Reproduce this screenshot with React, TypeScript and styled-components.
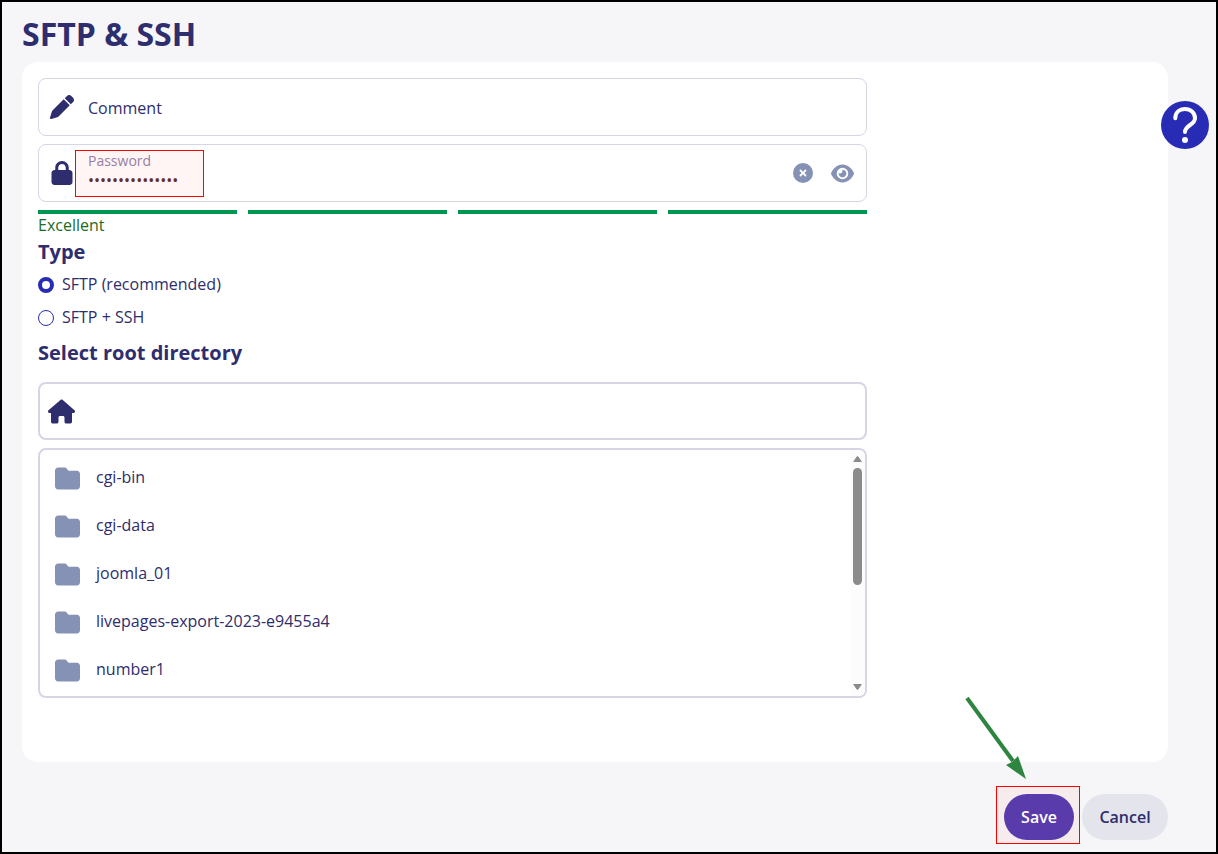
import React, { useState } from "react";
import styled, { createGlobalStyle } from "styled-components";
import { FaPen, FaLock, FaCircleXmark, FaEye, FaHouse, FaFolder } from "react-icons/fa6";

const navy = "#2e2d6d";
const slate = "#8592b5";
const line = "#d7d4e5";
const blue = "#282cb4";

const GlobalStyle = createGlobalStyle`
  * { box-sizing: border-box; }
  body {
    margin: 0;
    background: #f6f6f9;
    color: ${navy};
    font-family: "Open Sans", "Noto Sans", sans-serif;
    font-size: 16px;
  }
  button, input { font: inherit; color: inherit; }
`;

const Frame = styled.div`
  position: relative;
  display: flex;
  flex-direction: column;
  min-height: 100vh;
  padding: 0 48px 12px 20px;
  border: 2px solid #000;
`;

const Title = styled.h1`
  margin: 0;
  padding: 10px 0 6px;
  font-size: 32px;
  line-height: 44px;
  font-weight: 700;
`;

const Panel = styled.main`
  display: grid;
  grid-template-columns: 3fr 1fr;
  column-gap: 9px;
  flex: 1;
  padding: 16px 16px 64px;
  border-radius: 16px;
  background: #fff;
`;

const Form = styled.form`
  min-width: 0;
`;

const Field = styled.div`
  position: relative;
  display: flex;
  align-items: center;
  height: 58px;
  margin-bottom: 8px;
  padding: 0 11px 0 10px;
  border: 1px solid ${line};
  border-radius: 8px;
`;

const FieldIcon = styled.span`
  display: flex;
  justify-content: center;
  flex: none;
  width: 25px;
  margin-right: 14px;
`;

const FieldText = styled.div`
  display: flex;
  flex: 1;
  flex-direction: column;
  min-width: 0;
  padding-bottom: 4px;
`;

const FieldLabel = styled.label`
  color: #9284ac;
  font-size: 14px;
  line-height: 18px;
`;

const TextInput = styled.input`
  width: 100%;
  height: 20px;
  padding: 0;
  border: 0;
  outline: 0;
  background: transparent;
  line-height: 20px;

  &::placeholder { color: ${navy}; opacity: 1; }
`;

const CommentInput = styled(TextInput)`
  height: 26px;
  padding-top: 2px;
  line-height: 24px;
`;

const PasswordInput = styled(TextInput)`
  color: #59302f;
`;

const IconButton = styled.button`
  display: flex;
  align-items: center;
  justify-content: center;
  flex: none;
  width: 24px;
  height: 24px;
  margin-left: 16px;
  padding: 0;
  border: 0;
  background: none;
  color: ${slate};
`;

const Highlight = styled.span`
  position: absolute;
  border: 1px solid #f00;
  background: rgba(255, 64, 32, 0.05);
  pointer-events: none;
`;

const PasswordHighlight = styled(Highlight)`
  top: 5px;
  left: 36px;
  width: 129px;
  height: 47px;
`;

const Strength = styled.div`
  display: grid;
  grid-template-columns: repeat(4, 1fr);
  gap: 11px;
`;

const StrengthBar = styled.span`
  height: 4px;
  background: #00964f;
`;

const StrengthText = styled.p`
  margin: 0;
  color: #1e6b1e;
  line-height: 22px;
`;

const Group = styled.fieldset`
  min-width: 0;
  margin: 0;
  padding: 0;
  border: 0;
`;

const Legend = styled.legend`
  padding: 0;
  font-size: 20px;
  line-height: 32px;
  font-weight: 700;
`;

const Heading = styled.h2`
  margin: 3px 0 13px;
  font-size: 20px;
  line-height: 32px;
  font-weight: 700;
`;

const Option = styled.label`
  display: flex;
  align-items: center;
  height: 33px;
`;

const OptionText = styled.span`
  padding-bottom: 2px;
`;

const Radio = styled.input`
  appearance: none;
  width: 16px;
  height: 16px;
  margin: 0 8px 0 0;
  border: 1px solid ${blue};
  border-radius: 50%;
  background: #fff;

  &:checked { border-width: 4px; }
`;

const PathBar = styled.nav`
  display: flex;
  align-items: center;
  height: 58px;
  margin-bottom: 8px;
  padding: 0 7px;
  border: 2px solid ${line};
  border-radius: 8px;
`;

const HomeButton = styled.button`
  display: flex;
  justify-content: center;
  width: 28px;
  padding: 0;
  border: 0;
  background: none;
`;

const Browser = styled.div`
  display: flex;
  height: 250px;
  border: 2px solid ${line};
  border-radius: 8px;
  overflow: hidden;
`;

const FolderList = styled.ul`
  flex: 1;
  margin: 0;
  padding: 4px 0 0;
  list-style: none;
  overflow: hidden;
`;

const FolderButton = styled.button`
  display: flex;
  align-items: center;
  gap: 16px;
  width: 100%;
  height: 48px;
  padding: 0 15px;
  border: 0;
  background: none;
  text-align: left;
`;

const FolderName = styled.span`
  padding-bottom: 2px;
`;

const ScrollTrack = styled.div`
  display: flex;
  flex-direction: column;
  align-items: center;
  width: 15px;
  padding: 6px 0;
  background: #fcfcfc;
`;

const ScrollThumb = styled.span`
  width: 9px;
  height: 117px;
  margin: 6px 0 auto;
  border-radius: 5px;
  background: #8b8b8b;
`;

const HelpButton = styled.button`
  position: absolute;
  top: 99px;
  right: 7px;
  display: flex;
  width: 48px;
  height: 48px;
  padding: 0;
  border: 0;
  border-radius: 50%;
  background: ${blue};
`;

const Actions = styled.footer`
  display: flex;
  justify-content: flex-end;
  gap: 8px;
  margin-top: 32px;
`;

const SaveSlot = styled.div`
  position: relative;
  isolation: isolate;
`;

const Pill = styled.button<{ $primary?: boolean }>`
  min-width: ${(p) => (p.$primary ? "70px" : "86px")};
  height: 46px;
  padding: 0 17px;
  border: 0;
  border-radius: 23px;
  background: ${(p) => (p.$primary ? "#5a3bab" : "#e3e4ec")};
  color: ${(p) => (p.$primary ? "#fff" : navy)};
  font-weight: 600;
`;

const SaveHighlight = styled(Highlight)`
  inset: -8px -6px -4px -8px;
  z-index: -1;
`;

const Arrow = styled.svg`
  position: absolute;
  top: -98px;
  left: -39px;
  pointer-events: none;
`;

const folders = ["cgi-bin", "cgi-data", "joomla_01", "livepages-export-2023-e9455a4", "number1"];

export default function App() {
  const [comment, setComment] = useState("");
  const [password, setPassword] = useState("Xk7#mP2!vQ9$rT4");
  const [visible, setVisible] = useState(false);
  const [type, setType] = useState("sftp");

  return (
    <>
      <GlobalStyle />
      <Frame>
        <Title>SFTP &amp; SSH</Title>
        <Panel>
          <Form id="access" onSubmit={(e) => e.preventDefault()}>
            <Field>
              <FieldIcon><FaPen size={24} /></FieldIcon>
              <CommentInput
                aria-label="Comment"
                placeholder="Comment"
                value={comment}
                onChange={(e) => setComment(e.target.value)}
              />
            </Field>
            <Field>
              <FieldIcon><FaLock size={24} /></FieldIcon>
              <FieldText>
                <FieldLabel htmlFor="password">Password</FieldLabel>
                <PasswordInput
                  id="password"
                  type={visible ? "text" : "password"}
                  value={password}
                  onChange={(e) => setPassword(e.target.value)}
                />
              </FieldText>
              <IconButton type="button" aria-label="Clear password" onClick={() => setPassword("")}>
                <FaCircleXmark size={20} />
              </IconButton>
              <IconButton type="button" aria-label="Show password" onClick={() => setVisible(!visible)}>
                <FaEye size={23} />
              </IconButton>
              <PasswordHighlight />
            </Field>
            <Strength aria-hidden="true">
              <StrengthBar />
              <StrengthBar />
              <StrengthBar />
              <StrengthBar />
            </Strength>
            <StrengthText>Excellent</StrengthText>
            <Group>
              <Legend>Type</Legend>
              <Option>
                <Radio type="radio" name="type" checked={type === "sftp"} onChange={() => setType("sftp")} />
                <OptionText>SFTP (recommended)</OptionText>
              </Option>
              <Option>
                <Radio type="radio" name="type" checked={type === "ssh"} onChange={() => setType("ssh")} />
                <OptionText>SFTP + SSH</OptionText>
              </Option>
            </Group>
            <Heading>Select root directory</Heading>
            <PathBar aria-label="Current directory">
              <HomeButton type="button" aria-label="Home"><FaHouse size={27} /></HomeButton>
            </PathBar>
            <Browser>
              <FolderList>
                {folders.map((name) => (
                  <li key={name}>
                    <FolderButton type="button">
                      <FaFolder size={25} color={slate} />
                      <FolderName>{name}</FolderName>
                    </FolderButton>
                  </li>
                ))}
              </FolderList>
              <ScrollTrack aria-hidden="true">
                <svg width="9" height="6" viewBox="0 0 9 6"><path d="M4.5.3 8.3 5.5H.7Z" fill="#8b8b8b" stroke="#8b8b8b" strokeWidth="1" strokeLinejoin="round" /></svg>
                <ScrollThumb />
                <svg width="9" height="6" viewBox="0 0 9 6"><path d="M4.5 5.7 8.3.5H.7Z" fill="#8b8b8b" stroke="#8b8b8b" strokeWidth="1" strokeLinejoin="round" /></svg>
              </ScrollTrack>
            </Browser>
          </Form>
        </Panel>
        <Actions>
          <SaveSlot>
            <SaveHighlight />
            <Pill type="submit" form="access" $primary>Save</Pill>
            <Arrow width="64" height="84" viewBox="0 0 64 84" aria-hidden="true">
              <path d="M2 2 48 65" stroke="#2d8540" strokeWidth="4" fill="none" />
              <path d="M61 83 41 69 47 66 53 60Z" fill="#2d8540" />
            </Arrow>
          </SaveSlot>
          <Pill type="button">Cancel</Pill>
        </Actions>
        <HelpButton type="button" aria-label="Help">
          <svg width="48" height="48" viewBox="0 0 48 48" fill="none">
            <path d="M14.3 17.2C14.3 11.5 18.5 8 24 8S34 11.8 34 17.2C34 24 24 24 24 31" stroke="#fff" strokeWidth="4" strokeLinecap="round" />
            <circle cx="24" cy="39" r="3" fill="#fff" />
          </svg>
        </HelpButton>
      </Frame>
    </>
  );
}
